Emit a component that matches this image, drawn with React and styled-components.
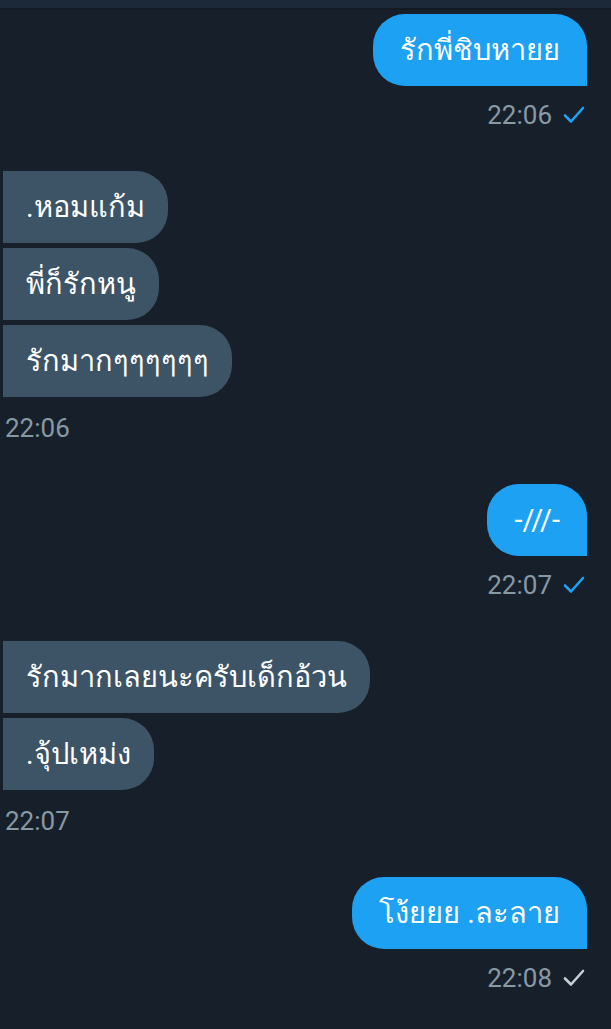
import React from "react";
import styled, { createGlobalStyle } from "styled-components";

const messages = [
  { id: 1, mine: true, texts: ["รักพี่ชิบหายย"], time: "22:06", read: true },
  { id: 2, mine: false, texts: [".หอมแก้ม", "พี่ก็รักหนู", "รักมากๆๆๆๆๆๆ"], time: "22:06" },
  { id: 3, mine: true, texts: ["-///-"], time: "22:07", read: true },
  { id: 4, mine: false, texts: ["รักมากเลยนะครับเด็กอ้วน", ".จุ้ปเหม่ง"], time: "22:07" },
  { id: 5, mine: true, texts: ["โง้ยยย .ละลาย"], time: "22:08", read: false },
];

const Check = ({ color }) => (
  <svg width="22" height="18" viewBox="0 0 22 18">
    <path
      d="M2 9.5 L8 15.5 L20 2"
      fill="none"
      stroke={color}
      strokeWidth="2.6"
      strokeLinecap="round"
      strokeLinejoin="round"
    />
  </svg>
);

const App = () => {
  return (
    <>
      <GlobalStyle />
      <Screen>
        <TopBar />
        <Thread>
          {messages.map((group) => (
            <Group key={group.id} $mine={group.mine}>
              {group.texts.map((text, i) => (
                <Bubble key={i} $mine={group.mine}>
                  {text}
                </Bubble>
              ))}
              <Meta $mine={group.mine}>
                <Time>{group.time}</Time>
                {group.mine && (
                  <Check color={group.read ? "#1da1f2" : "#c6cdd4"} />
                )}
              </Meta>
            </Group>
          ))}
        </Thread>
      </Screen>
    </>
  );
};

const GlobalStyle = createGlobalStyle`
  html, body {
    margin: 0;
    padding: 0;
    background: #17202a;
  }
  body {
    font-family: Roboto, "Noto Sans", "DejaVu Sans", sans-serif;
  }
`;

const Screen = styled.div`
  width: 611px;
  min-height: 1029px;
  background: #17202a;
  overflow: hidden;
`;

const TopBar = styled.div`
  height: 8px;
  background: #1c2939;
  border-bottom: 2px solid #121a23;
`;

const Thread = styled.div`
  display: flex;
  flex-direction: column;
  gap: 41px;
  padding: 4px 24px 0 3px;
`;

const Group = styled.div`
  display: flex;
  flex-direction: column;
  align-items: ${(p) => (p.$mine ? "flex-end" : "flex-start")};
  gap: 5px;
`;

const Bubble = styled.div`
  box-sizing: border-box;
  height: 72px;
  display: flex;
  align-items: center;
  padding: 0 ${(p) => (p.$mine ? "27px" : "23px")};
  font-size: 29px;
  color: #ffffff;
  white-space: nowrap;
  background: ${(p) => (p.$mine ? "#1da1f2" : "#3d5466")};
  border-radius: ${(p) => (p.$mine ? "32px 32px 0 32px" : "0 32px 32px 0")};
`;

const Meta = styled.div`
  display: flex;
  align-items: center;
  gap: 11px;
  margin-top: ${(p) => (p.$mine ? "9px" : "11px")};
  padding-left: ${(p) => (p.$mine ? "0" : "2px")};
  margin-right: ${(p) => (p.$mine ? "2px" : "0")};
`;

const Time = styled.span`
  font-size: 26px;
  color: #8899a6;
  line-height: 30px;
`;

export default App;
